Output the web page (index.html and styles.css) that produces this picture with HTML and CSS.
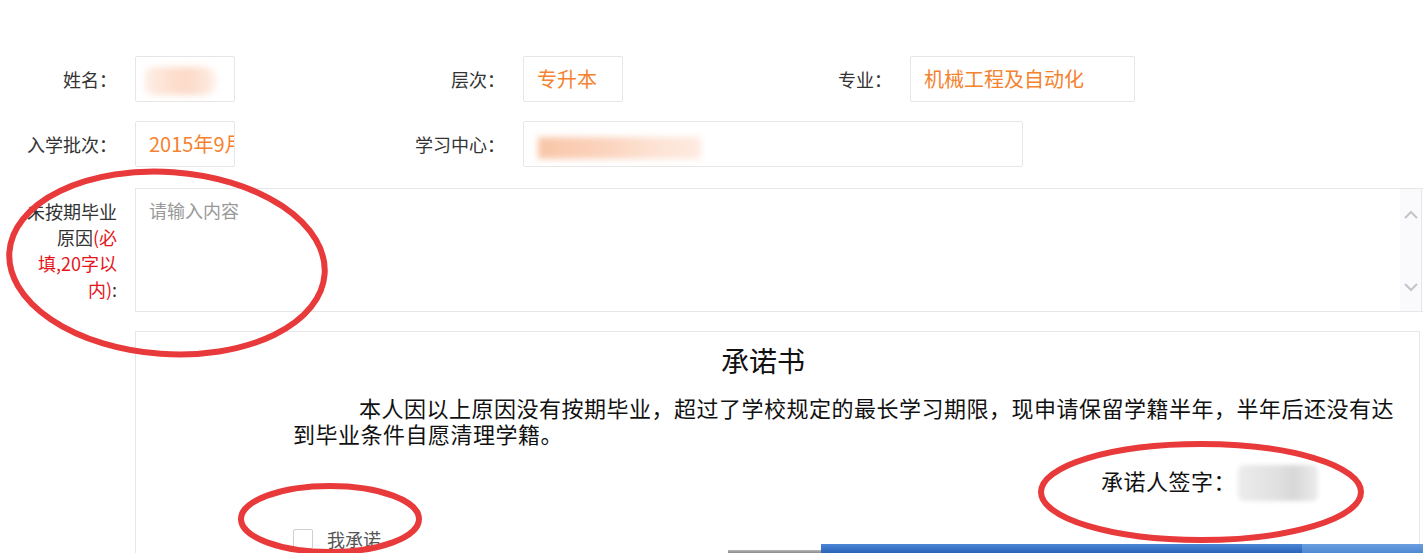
FILE: index.html
```html
<!DOCTYPE html>
<html lang="zh-CN">
<head>
<meta charset="utf-8">
<title>保留学籍申请</title>
<link rel="stylesheet" href="styles.css">
</head>
<body>
<div class="page">
  <div class="grid">
    <div class="label">姓名：</div>
    <div class="input"><span class="blur blur-name"></span></div>
    <div class="label">层次：</div>
    <div class="input">专升本</div>
    <div class="label">专业：</div>
    <div class="input">机械工程及自动化</div>

    <div class="label">入学批次：</div>
    <div class="input">2015年9月</div>
    <div class="label">学习中心：</div>
    <div class="input wide"><span class="blur blur-center"></span></div>
  </div>

  <div class="reason-row">
    <div class="reason-label">未按期毕业<br>原因<span class="req">(必<br>填,20字以<br>内)</span>:</div>
    <div class="textarea">
      <span class="placeholder">请输入内容</span>
      <div class="scrollbar">
        <svg width="16" height="12" viewBox="0 0 16 12"><path d="M2 9 L8 3 L14 9" fill="none" stroke="#c4c4c8" stroke-width="2"/></svg>
        <svg width="16" height="12" viewBox="0 0 16 12"><path d="M2 3 L8 9 L14 3" fill="none" stroke="#c4c4c8" stroke-width="2"/></svg>
      </div>
    </div>
  </div>

  <div class="promise">
    <div class="promise-title">承诺书</div>
    <p class="promise-text">本人因以上原因没有按期毕业，超过了学校规定的最长学习期限，现申请保留学籍半年，半年后还没有达到毕业条件自愿清理学籍。</p>
    <div class="sign-row">承诺人签字：<span class="blur blur-sign"></span></div>
    <label class="agree"><span class="checkbox"></span><span class="agree-text">我承诺</span></label>
  </div>
</div>

<div class="bottom-bars">
  <div class="bar-gray"></div>
  <div class="bar-blue"></div>
  <div class="bar-light"></div>
</div>

<svg class="marks" width="1423" height="553" viewBox="0 0 1423 553">
  <ellipse cx="167" cy="263" rx="158" ry="91" transform="rotate(4 167 263)" fill="none" stroke="#e8393b" stroke-width="6"/>
  <ellipse cx="330" cy="519" rx="89" ry="33" fill="none" stroke="#e8393b" stroke-width="6"/>
  <ellipse cx="1201" cy="492" rx="160" ry="48" fill="none" stroke="#e8393b" stroke-width="6"/>
</svg>
</body>
</html>
```

FILE: styles.css
```css
html, body {
  margin: 0;
  padding: 0;
  background: #fff;
  overflow: hidden;
}
body {
  width: 1423px;
  height: 553px;
  position: relative;
  font-family: "Noto Sans CJK SC", "Liberation Sans", sans-serif;
  color: #333;
}
.page {
  padding-top: 56px;
}
.grid {
  display: grid;
  grid-template-columns: 117px 100px 252px 100px 251px 225px;
  column-gap: 18px;
  row-gap: 19px;
  align-items: center;
}
.label {
  text-align: right;
  font-size: 18px;
  color: #333;
  line-height: 46px;
}
.input {
  height: 46px;
  box-sizing: border-box;
  border: 1px solid #e6e6e6;
  border-radius: 2px;
  padding-left: 13px;
  font-size: 20px;
  line-height: 44px;
  color: #f5822e;
  white-space: nowrap;
  overflow: hidden;
  position: relative;
}
.input.wide {
  grid-column: 4 / span 3;
  width: 500px;
}
.blur {
  display: inline-block;
  position: absolute;
  filter: blur(3px);
}
.blur-name {
  left: 9px;
  top: 10px;
  width: 72px;
  height: 28px;
  border-radius: 10px 16px 16px 10px;
  background: linear-gradient(90deg, #fdeee6, #fde0d0 35%, #fcdac8 60%, #fde6da 85%, #fff4ee);
}
.blur-center {
  left: 14px;
  top: 15px;
  width: 163px;
  height: 22px;
  background: linear-gradient(90deg, #f9c6a8, #fbd3bd 40%, #fde2d3 70%, #feebe1 100%);
}
.reason-row {
  display: flex;
  margin-top: 21px;
  gap: 18px;
}
.reason-label {
  width: 117px;
  box-sizing: border-box;
  padding-top: 10px;
  text-align: right;
  font-size: 18px;
  line-height: 26px;
  color: #333;
}
.req {
  color: #e5161b;
}
.textarea {
  flex: 1;
  height: 124px;
  box-sizing: border-box;
  border: 1px solid #e6e6e6;
  border-right: 0;
  position: relative;
  padding: 10px 13px;
}
.placeholder {
  font-size: 18px;
  color: #999;
  line-height: 22px;
}
.scrollbar {
  position: absolute;
  right: 1px;
  top: 0;
  bottom: 0;
  width: 22px;
  background: #faf9fb;
  border-right: 1px solid #e6e6e6;
  display: flex;
  flex-direction: column;
  justify-content: space-between;
  align-items: center;
  padding: 20px 0 18px;
  box-sizing: border-box;
}
.promise {
  margin: 19px 0 0 135px;
  width: 1285px;
  height: 260px;
  box-sizing: border-box;
  border: 1px solid #e6e6e6;
  padding: 13px 0 0 157px;
}
.promise-title {
  margin-left: -157px;
  padding-right: 29px;
  text-align: center;
  font-size: 28px;
  line-height: 30px;
  color: #111;
}
.promise-text {
  margin: 22px 0 0;
  width: 1112px;
  text-indent: 66px;
  font-family: "Liberation Serif", "Noto Sans CJK SC", serif;
  font-size: 22px;
  letter-spacing: 0.5px;
  line-height: 26px;
  color: #111;
}
.sign-row {
  margin-top: 21px;
  height: 26px;
  display: flex;
  justify-content: flex-end;
  align-items: center;
  padding-right: 101px;
  font-family: "Liberation Serif", "Noto Sans CJK SC", serif;
  font-size: 22px;
  letter-spacing: 0.5px;
  line-height: 26px;
  color: #111;
  position: relative;
}
.blur-sign {
  position: relative;
  flex: none;
  width: 80px;
  height: 36px;
  margin-left: 2px;
  background: linear-gradient(90deg, #ececec, #e0e0e0 50%, #d8d8d8 70%, #ececec);
  border-radius: 6px;
  filter: blur(2px);
}
.agree {
  margin-top: 32px;
  display: flex;
  align-items: center;
  gap: 14px;
  height: 22px;
}
.checkbox {
  width: 20px;
  height: 20px;
  box-sizing: border-box;
  border: 1px solid #cfcfcf;
  border-radius: 2px;
  background: #fff;
}
.agree-text {
  font-size: 18px;
  color: #555;
  line-height: 22px;
}
.bottom-bars {
  position: absolute;
  left: 728px;
  bottom: 0;
  width: 695px;
  height: 9px;
  display: flex;
  align-items: flex-end;
}
.bar-gray {
  width: 93px;
  height: 3px;
  background: linear-gradient(#b8b8b8, #8a8a8a);
}
.bar-blue {
  width: 481px;
  height: 9px;
  background: linear-gradient(#4a86d6, #2a63b8);
}
.bar-light {
  flex: 1;
  height: 9px;
  background: linear-gradient(#6a9ee0, #4f88d2);
}
.marks {
  position: absolute;
  left: 0;
  top: 0;
  pointer-events: none;
}
```
